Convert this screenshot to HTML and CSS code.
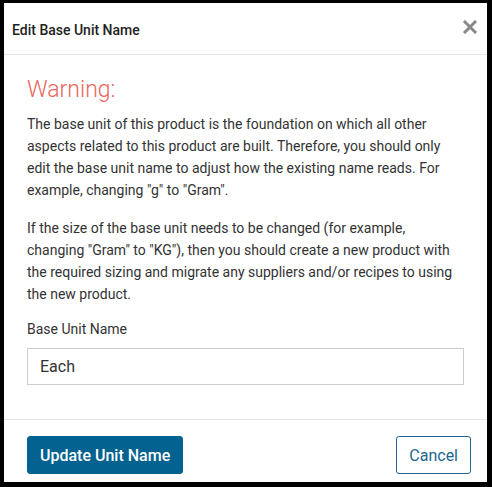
FILE: index.html
```html
<!DOCTYPE html>
<html>
<head>
<meta charset="utf-8">
<link rel="stylesheet" href="styles.css">
</head>
<body>
<div class="modal">
  <div class="modal-header">
    <h1 class="modal-title">Edit Base Unit Name</h1>
    <span class="close" aria-label="Close"><svg width="14" height="14" viewBox="0 0 14 14"><path d="M2 2 L12 12 M12 2 L2 12" stroke="#888" stroke-width="3" stroke-linecap="square"/></svg></span>
  </div>
  <div class="modal-body">
    <h2 class="warning">Warning:</h2>
    <p>The base unit of this product is the foundation on which all other aspects related to this product are built. Therefore, you should only edit the base unit name to adjust how the existing name reads. For example, changing "g" to "Gram".</p>
    <p>If the size of the base unit needs to be changed (for example, changing "Gram" to "KG"), then you should create a new product with the required sizing and migrate any suppliers and/or recipes to using the new product.</p>
    <label class="label">Base Unit Name</label>
    <div class="input">Each</div>
  </div>
  <div class="modal-footer">
    <button class="btn btn-primary">Update Unit Name</button>
    <button class="btn btn-outline">Cancel</button>
  </div>
</div>
</body>
</html>
```
FILE: styles.css
```css
html, body {
  margin: 0;
  padding: 0;
  background: #000;
  height: 100%;
}
body {
  padding: 3px 5px 5px 4px;
  box-sizing: border-box;
  font-family: Roboto, "Liberation Sans", sans-serif;
  color: #333;
}
.modal {
  background: #fff;
  height: 479px;
  display: flex;
  flex-direction: column;
  overflow: hidden;
}
.modal-header {
  height: 51px;
  border-bottom: 1px solid #e5e5e5;
  display: flex;
  align-items: center;
  justify-content: space-between;
  padding: 0 10px 0 8px;
  flex-shrink: 0;
}
.modal-title {
  margin: 0;
  font-size: 14px;
  font-weight: 500;
  color: #222;
  padding-top: 2px;
}
.close {
  display: flex;
  width: 14px;
  height: 14px;
  margin-top: -4px;
}
.modal-body {
  padding: 22px 23px 0 23px;
  flex: 1;
  border-bottom: 1px solid #e5e5e5;
}
.warning {
  margin: 0 0 10px;
  font-size: 23px;
  font-weight: 300;
  color: #e8675d;
  line-height: 26px;
}
.modal-body p {
  margin: 0 0 16px;
  font-size: 14px;
  line-height: 22px;
  color: #333;
}
.label {
  display: block;
  font-size: 14px;
  line-height: 16px;
  color: #333;
  margin: 16px 0 11px;
}
.input {
  border: 1px solid #ccc;
  height: 35px;
  line-height: 35px;
  padding: 0 12px;
  font-size: 16px;
  color: #333;
}
.modal-footer {
  flex-shrink: 0;
  height: 62px;
  display: flex;
  justify-content: space-between;
  align-items: flex-start;
  padding: 16px 16px 0 23px;
  box-sizing: border-box;
}
.btn {
  font-family: Roboto, "Liberation Sans", sans-serif;
  font-size: 16px;
  height: 38px;
  border-radius: 3px;
  cursor: pointer;
  white-space: nowrap;
  padding: 0 12px;
}
.btn-primary {
  background: #03628f;
  color: #fff;
  border: 1px solid #03628f;
  font-weight: 500;
}
.btn-outline {
  background: #fff;
  color: #1c6690;
  border: 1px solid #1c6690;
}
```
